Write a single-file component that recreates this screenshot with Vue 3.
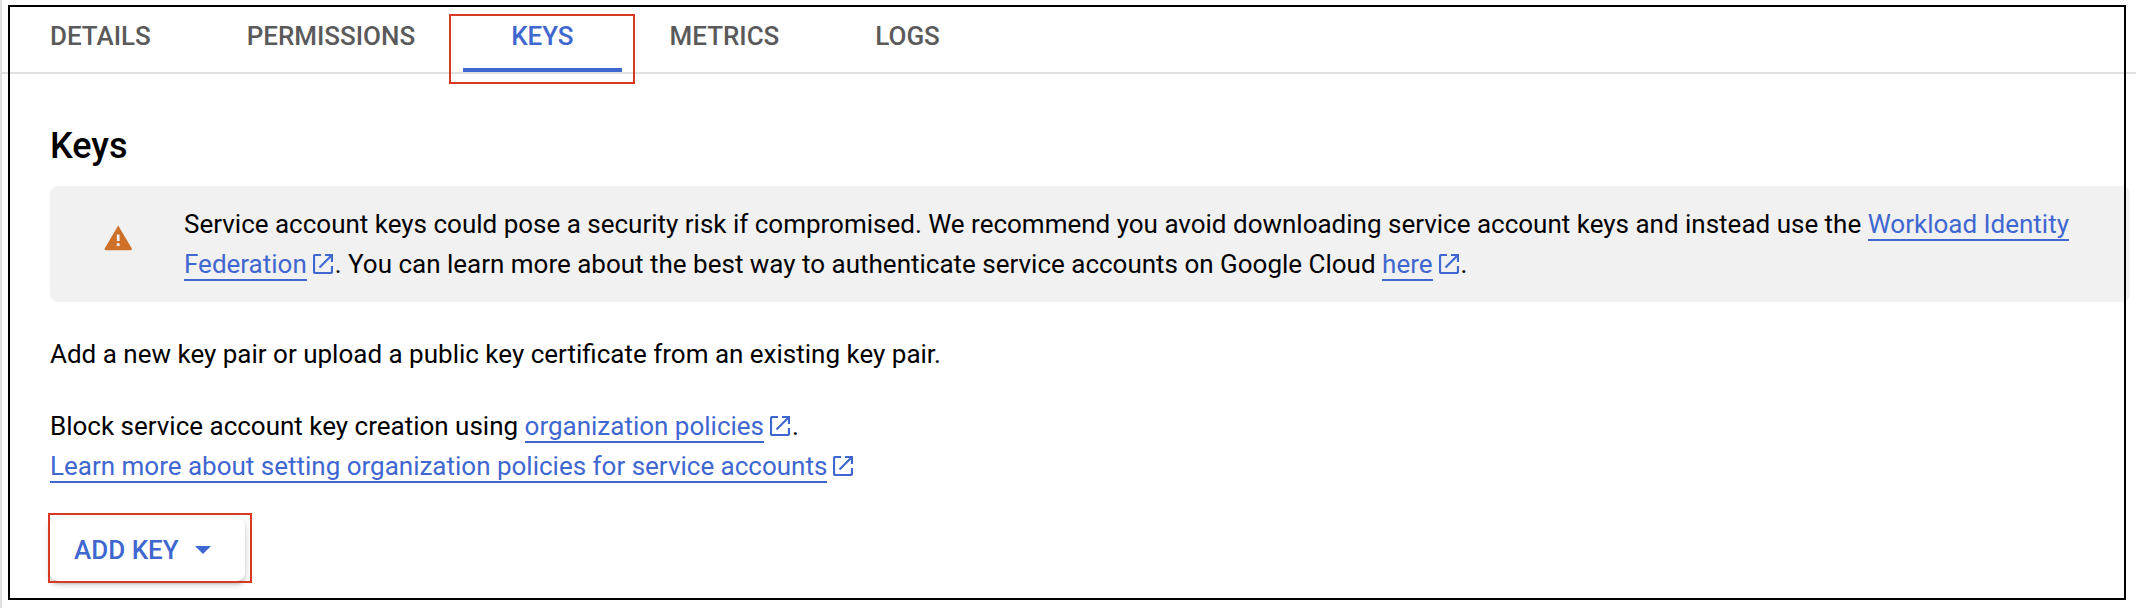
<script setup>
import { h } from 'vue'

const tabs = [
  { label: 'DETAILS' },
  { label: 'PERMISSIONS' },
  { label: 'KEYS', active: true },
  { label: 'METRICS' },
  { label: 'LOGS' },
]

const openPaths = [
  'M8 1H2.5Q1 1 1 2.5V17.5Q1 19 2.5 19H17.5Q19 19 19 17.5V12',
  'M12 1H19V8',
  'M18.5 1.5L6.5 13.5',
]

const OpenIcon = () =>
  h('svg', { class: 'open', viewBox: '0 0 20 20', width: 20, height: 20 },
    openPaths.map((d) => h('path', { d, fill: 'none', stroke: '#3f67d0', 'stroke-width': 2.2 })))
</script>

<template>
  <div class="page">
    <nav class="tabs">
      <a v-for="tab in tabs" :key="tab.label" class="tab" :class="{ active: tab.active }">{{ tab.label }}</a>
    </nav>

    <main class="content">
      <h1>Keys</h1>

      <section class="notice">
        <svg class="warning" viewBox="0 0 28 26" width="28" height="26">
          <path d="M14.2 .5L27.8 23.6Q28 25.2 26.6 25.2H1.8Q.2 25.2 .7 23.6Z" fill="#cf7029" />
          <path d="M12.8 9.6H15.6V16H12.8ZM12.8 18.2H15.6V21H12.8Z" fill="#f1f1f1" />
        </svg>
        <p class="notice-text">Service account keys could pose a security risk if compromised. We recommend you avoid downloading service account keys and instead use the <a class="link">Workload Identity Federation</a><OpenIcon class="open" />. You can learn more about the best way to authenticate service accounts on Google Cloud <a class="link">here</a><OpenIcon class="open" />.</p>
      </section>

      <p class="intro">Add a new key pair or upload a public key certificate from an existing key pair.</p>

      <p class="policy">Block service account key creation using <a class="link">organization policies</a><OpenIcon class="open" />.<br><a class="link">Learn more about setting organization policies for service accounts</a><OpenIcon class="open" /></p>

      <button class="add">
        <span>ADD KEY</span>
        <svg width="16" height="8" viewBox="0 0 16 8"><path d="M0 0H16L8 8Z" fill="#3f67d0" /></svg>
      </button>
    </main>

    <div class="frame"></div>
    <div class="mark mark-tab"></div>
    <div class="mark mark-add"></div>
  </div>
</template>

<style>
body {
  margin: 0;
  background: #fff;
}
</style>

<style scoped>
.page {
  position: relative;
  box-sizing: border-box;
  width: 2136px;
  height: 608px;
  overflow: hidden;
  border-left: 2px solid #e0e0e0;
  background: #fff;
  color: #000;
  font-family: Roboto, "Liberation Sans", sans-serif;
  font-size: 26px;
  line-height: 40px;
}
.tabs {
  display: flex;
  height: 72px;
  border-bottom: 2px solid #e0e0e0;
}
.tab {
  box-sizing: border-box;
  height: 72px;
  padding: 16px 48px 0;
  font-weight: 500;
  letter-spacing: -0.03px;
  color: #5a5a5a;
}
.tab.active {
  color: #3f67d0;
  border-bottom: 4px solid #3f67d0;
}
.content {
  padding: 48px 6px 0 48px;
}
h1 {
  margin: 0 0 16px;
  font-size: 36px;
  line-height: 48px;
  font-weight: 500;
}
.notice {
  display: flex;
  box-sizing: border-box;
  height: 116px;
  padding: 18px 50px 18px 54px;
  border-radius: 8px;
  background: #f1f1f1;
}
.warning {
  flex: none;
  margin: 21px 52px 0 0;
}
p {
  margin: 0;
  letter-spacing: -0.005px;
  font-variant-ligatures: common-ligatures;
}
.link {
  color: #3f67d0;
  border-bottom: 2px solid #3f67d0;
}
.open {
  width: 20px;
  height: 20px;
  margin: 0 2px 0 6px;
  vertical-align: -1px;
}
.intro {
  margin-top: 32px;
  letter-spacing: normal;
}
.policy {
  margin-top: 32px;
}
.add {
  display: flex;
  align-items: center;
  gap: 16px;
  width: 195px;
  height: 63px;
  margin-top: 32px;
  padding: 0 0 0 24px;
  border: 0;
  border-radius: 8px;
  background: #fff;
  box-shadow: 0 6px 2px -4px rgba(0, 0, 0, 0.2), 0 4px 4px rgba(0, 0, 0, 0.14), 0 2px 10px rgba(0, 0, 0, 0.12);
  color: #3f67d0;
  font: 500 26px/40px Roboto, "Liberation Sans", sans-serif;
}
.frame {
  position: absolute;
  box-sizing: border-box;
  left: 6px;
  top: 5px;
  width: 2118px;
  height: 595px;
  border: 2px solid #000;
}
.mark {
  position: absolute;
  box-sizing: border-box;
  border: 2px solid #d63a22;
}
.mark-tab {
  left: 447px;
  top: 14px;
  width: 186px;
  height: 70px;
}
.mark-add {
  left: 46px;
  top: 513px;
  width: 204px;
  height: 70px;
}
</style>
